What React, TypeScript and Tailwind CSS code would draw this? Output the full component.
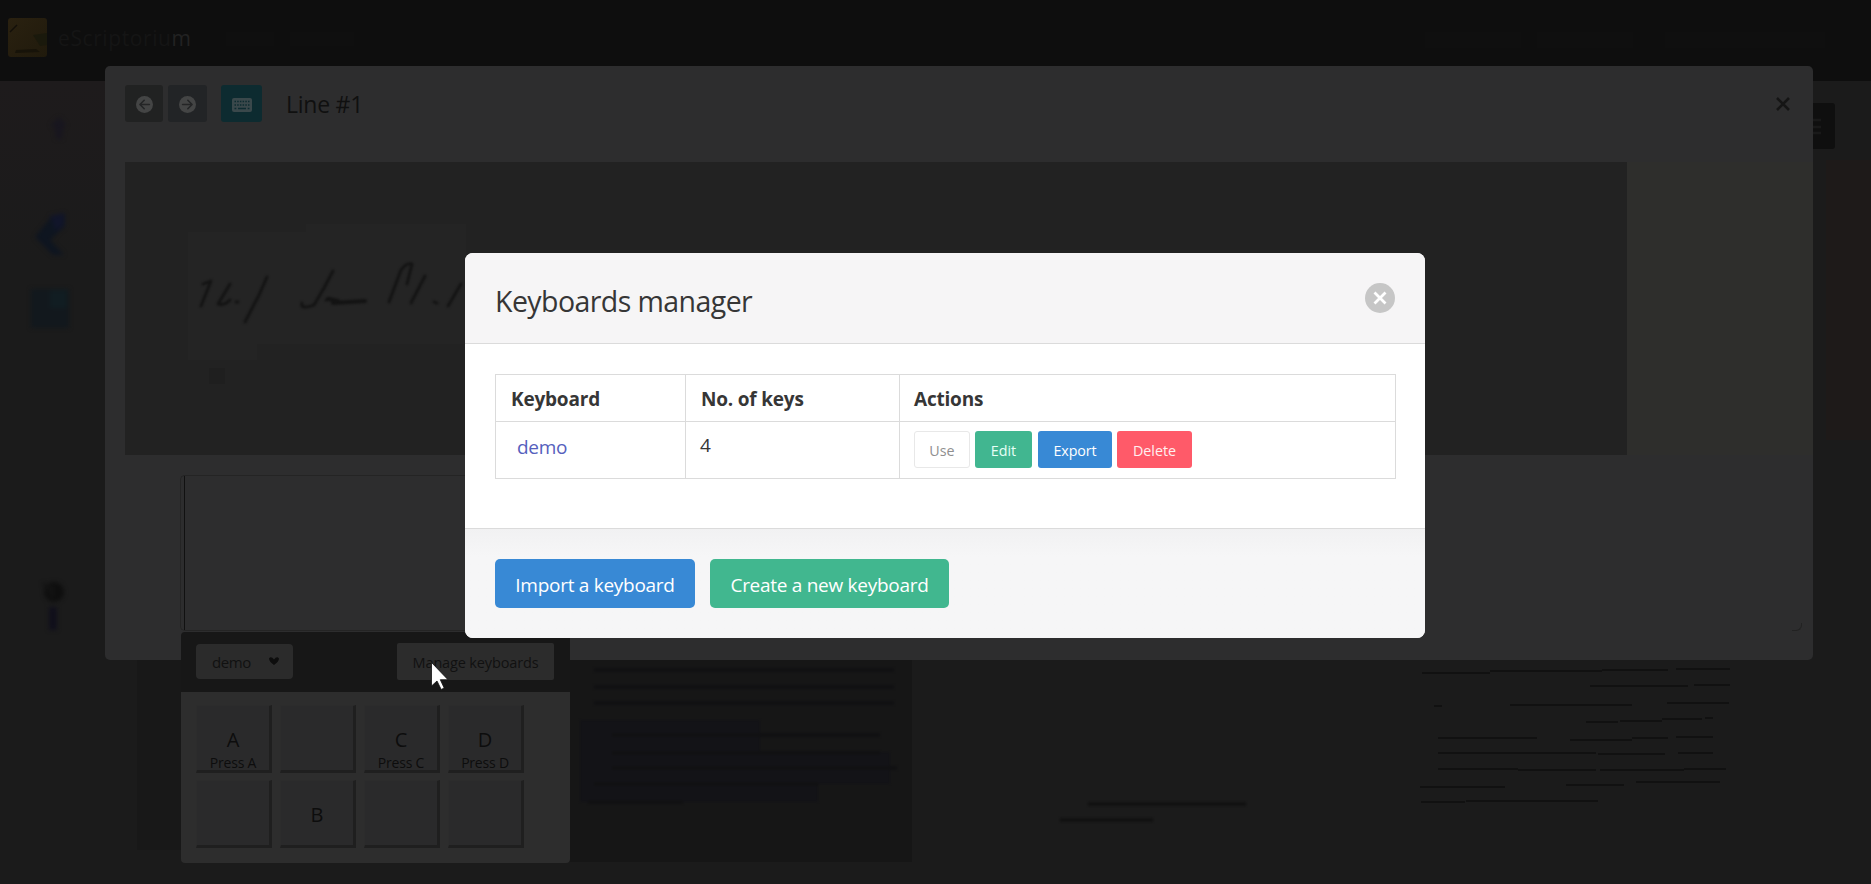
import type { ReactNode } from "react";

function CircleArrow({ flip = false }: { flip?: boolean }) {
  return (
    <svg width="17" height="17" viewBox="0 0 16 16" className={flip ? "-scale-x-100" : ""}>
      <circle cx="8" cy="8" r="8" fill="#444545" />
      <path d="M12.6 8H4M7.700 4L3.700 8l4 4" fill="none" stroke="#242526" strokeWidth="1.5" strokeLinecap="round" strokeLinejoin="round" />
    </svg>
  );
}

function KeyboardIcon() {
  return (
    <svg width="20" height="14" viewBox="0 0 20 14">
      <rect width="20" height="14" rx="2" fill="#3a484b" />
      <path d="M2.500 3.500h15M2.500 7h15" stroke="#0d2b30" strokeWidth="1.5" strokeDasharray="1.5 1.2" />
      <path d="M2.500 10.500H4.300M6 10.500h8M15.700 10.500h1.800" stroke="#0d2b30" strokeWidth="1.5" />
    </svg>
  );
}

function ToolButton({ className, children }: { className: string; children: ReactNode }) {
  return <button className={`flex h-[37px] items-center justify-center rounded-[3px] pt-0.5 ${className}`}>{children}</button>;
}

function SiteHeader() {
  return (
    <header className="flex h-[81px] items-start bg-[#0e0e0e] pl-2 pt-[18px]">
      <svg width="40" height="40" viewBox="0 0 40 40">
        <defs>
          <linearGradient id="logo" x1="0" y1="0" x2="1" y2="1">
            <stop offset="0" stopColor="#2a2110" />
            <stop offset="1" stopColor="#201a0c" />
          </linearGradient>
        </defs>
        <rect width="39" height="39" rx="3" fill="url(#logo)" />
        <path d="M7 35l25-1-4-3-20 1z" fill="#171309" />
        <path d="M2 14l7-7" stroke="#120f09" strokeWidth="1.5" />
        <path d="M25 17l14-2v12l-7 1z" fill="#1a190c" />
      </svg>
      <div className="ml-2.5 flex w-[136px] pt-[5px] text-[21px] leading-[30px] tracking-[0.6px]">
        <span className="text-[#151515]">eScriptoriu</span>
        <span className="text-[#222222]">m</span>
      </div>
      <div className="ml-8 mt-[14px] h-[14px] w-12 bg-[#0f0f0f]" />
      <div className="ml-4 mt-[14px] h-[14px] w-16 bg-[#0f0f0f]" />
      <div className="ml-[1071px] mt-[14px] h-4 w-24 bg-[#0f0f0f]" />
      <div className="ml-4 mt-[14px] h-4 w-24 bg-[#0f0f0f]" />
      <div className="ml-8 mt-[14px] h-4 w-40 bg-[#0f0f0f]" />
    </header>
  );
}

function PageDrawing() {
  return (
    <svg width="1871" height="803" viewBox="0 81 1871 803" className="block">
      <defs>
        <filter id="soft" x="-50%" y="-50%" width="200%" height="200%" colorInterpolationFilters="sRGB">
          <feGaussianBlur stdDeviation="2.2" />
        </filter>
        <filter id="faint" x="-10%" y="-50%" width="120%" height="200%" colorInterpolationFilters="sRGB">
          <feGaussianBlur stdDeviation="1" />
        </filter>
        <linearGradient id="tint" x1="0" y1="0" x2="0" y2="1">
          <stop offset="0" stopColor="#1e1b1c" />
          <stop offset="1" stopColor="#1b1b1b" />
        </linearGradient>
      </defs>
      <rect x="0" y="81" width="105" height="180" fill="url(#tint)" />
      <rect x="1826" y="160" width="45" height="280" fill="#1e1a19" />
      <g filter="url(#soft)">
        <path d="M59 117l7 8-3 4-1 10h-6l-1-10-4-4z" fill="#18161f" />
        <path d="M65 214V226L50 240 64 255H53L35 237 52 216z" fill="#0e1520" />
        <path d="M50 216l14-3v13l-8 5z" fill="#11152a" />
        <rect x="31" y="289" width="38" height="39" fill="#12181d" />
        <rect x="50" y="290" width="17" height="18" fill="#111d22" />
        <circle cx="54" cy="592" r="10" fill="#0e0e0e" />
        <path d="M42 583l12 2v16z" fill="#121212" />
        <rect x="49" y="607" width="8" height="23" fill="#100f1b" />
      </g>
      <rect x="1790" y="103" width="45" height="46" rx="3" fill="#0f0f0f" />
      <path d="M1805 120h16M1805 127h16M1805 133h16" stroke="#191919" strokeWidth="2.5" />
      <rect x="137" y="660" width="50" height="190" fill="#181818" />
      <rect x="568" y="660" width="344" height="202" fill="#161616" />
      <g filter="url(#faint)">
        <path d="M580 720H760V752H890V784H818V802H580z" fill="#131317" />
        <path d="M594 670h300M594 687h300M594 703h300M612 735h268M612 753h268M612 768h285M594 784h224M588 802h95" stroke="#111113" strokeWidth="4" />
      </g>
      <g filter="url(#faint)" stroke="#121212" strokeWidth="4">
        <path d="M1088 804h158M1060 820h93" />
      </g>
      <g stroke="#111111" strokeWidth="2" fill="none">
        <path d="M1422 673h68M1490 671h112M1602 670h66M1676 669h54" />
        <path d="M1590 686h98M1694 685h36" />
        <path d="M1434 706h8M1510 705h122M1667 703h62" />
        <path d="M1586 722h32M1620 721h42M1662 719h40M1705 718h8" />
        <path d="M1438 738h99M1570 740h62M1632 738h36M1676 737h37" />
        <path d="M1438 753h158M1598 754h67M1678 753h35" />
        <path d="M1438 769h80M1518 770h78M1600 770h84M1684 769h42" />
        <path d="M1420 787h85M1566 785h58M1636 782h84" />
        <path d="M1421 802h44M1466 801h132" />
      </g>
    </svg>
  );
}

function LineDialog() {
  return (
    <section className="absolute left-[105px] top-[66px] h-[594px] w-[1708px] overflow-hidden rounded-[5px] bg-[#2d2d2e]">
      <div className="flex h-24 pl-5 pt-[19px]">
        <ToolButton className="w-[38px] bg-[#212222]"><CircleArrow /></ToolButton>
        <ToolButton className="ml-[5px] w-[39px] bg-[#222426]"><CircleArrow flip /></ToolButton>
        <ToolButton className="ml-3.5 w-[41px] bg-[#0d2b30]"><KeyboardIcon /></ToolButton>
        <h1 className="ml-[24px] mt-px text-[23px] leading-9 tracking-[-0.25px] text-[#101010]">Line #1</h1>
        <svg width="14" height="14" viewBox="0 0 14 14" className="ml-auto mr-[23px] mt-[12px]">
          <path d="M1 1l12 12M13 1L1 13" stroke="#151515" strokeWidth="2.600" />
        </svg>
      </div>
      <div className="flex">
        <div className="ml-5 h-[293px] w-[1502px] bg-[#222222]">
          <svg width="1502" height="293" viewBox="125 162 1502 293">
            <defs>
              <filter id="ink" x="-10%" y="-20%" width="120%" height="140%" colorInterpolationFilters="sRGB">
                <feGaussianBlur stdDeviation="1.2" />
              </filter>
            </defs>
            <path d="M188 232h118v-8h160v120H257v16h-69z" fill="#242424" />
            <rect x="209" y="368" width="16" height="16" fill="#1f1f1f" />
            <g filter="url(#ink)" fill="none" stroke="#131313" strokeWidth="2.800" strokeLinecap="round" strokeLinejoin="round">
              <path d="M203 284l8-3-10 25M230 284l-12 20q6 2 12-4M236 302l2 0M267 277l-8 18-14 27" />
              <path d="M333 271l-9 17-10 17q-14 5-12-2M326 300q6-3 10 2" />
              <path d="M401 270l-12 32M401 270q6-8 11-6l-5 20M425 276l-14 27M434 302l3 1M461 284l-13 22" />
              <path d="M333 303l32-2M328 299l10 2" strokeWidth="4" />
            </g>
          </svg>
        </div>
        <div className="h-[293px] flex-1 bg-[#2e2e2c]" />
      </div>
      <div className="ml-[75px] mt-5 flex h-[156px] w-[1622px] items-end justify-between">
        <div className="h-[156px] w-[340px] rounded-l-[5px] border border-r-0 border-[#242424] pl-[3px]">
          <div className="h-[154px] border-l border-[#111111]" />
        </div>
        <div className="h-[8px] w-[10px] rounded-br-[6px] border-b border-r border-[#222222]" />
      </div>
    </section>
  );
}

function Key({ label, hint }: { label?: string; hint?: string }) {
  return (
    <div className="flex h-[68px] w-[76px] flex-col items-center border-b-[3px] border-r-[3px] border-[#1f1f1f] border-l border-t border-l-[#2c2c2c] border-t-[#2c2c2c] bg-[#2a2a2b] pt-[20px] text-[#0d0d0d]">
      <span className="text-[20px] leading-7">{label}</span>
      {hint && <span className="-mt-[1px] whitespace-nowrap text-[14px] leading-5 tracking-[-0.2px]">{hint}</span>}
    </div>
  );
}

function KeyboardPanel() {
  return (
    <section className="absolute left-[181px] top-[632px] h-[231px] w-[389px] overflow-hidden rounded-[4px] bg-[#2d2d2d]">
      <div className="flex h-[60px] items-start justify-between bg-[#171717] pl-[15px] pr-4 pt-[11px]">
        <div className="mt-px flex h-[35px] w-[97px] items-center rounded-[4px] bg-[#2b2b2b] pl-4 pt-0.5 text-[15px] tracking-[-0.4px] text-[#111111]">
          <span>demo</span>
          <svg width="12" height="10" viewBox="0 0 12 10" className="-mt-1 ml-[17px]">
            <path d="M1 2.500q2-3 5 1 3-4 5-1 0 3-5 6.500-5-3.500-5-6.500z" fill="#0d0d0d" />
          </svg>
        </div>
        <button className="h-[37px] w-[157px] whitespace-nowrap rounded-[2px] bg-[#2c2c2c] pt-0.5 text-[14.500px] tracking-[-0.15px] text-[#111111]">Manage keyboards</button>
      </div>
      <div className="grid grid-cols-[repeat(4,76px)] gap-x-2 gap-y-[7px] pl-[15px] pt-[13px]">
        <Key label="A" hint="Press A" />
        <Key />
        <Key label="C" hint="Press C" />
        <Key label="D" hint="Press D" />
        <Key />
        <Key label="B" />
        <Key />
        <Key />
      </div>
    </section>
  );
}

function SmallButton({ className, children }: { className: string; children: ReactNode }) {
  return <button className={`h-[37px] rounded-[3px] pt-0.5 text-[14.300px] leading-5 ${className}`}>{children}</button>;
}

function KeyboardsManager() {
  return (
    <section className="absolute left-[465px] top-[253px] flex h-[385px] w-[960px] flex-col overflow-hidden rounded-[8px] bg-white text-[#363636]">
      <header className="flex h-[91px] shrink-0 items-start justify-between border-b border-[#dbdbdb] bg-[#f6f5f6] px-[30px]">
        <h2 className="mt-[28px] text-[28.500px] leading-10 tracking-[-0.570px]">Keyboards manager</h2>
        <button className="mt-[30px] flex size-[30px] items-center justify-center rounded-full bg-[#c6c6c6]">
          <svg width="14" height="14" viewBox="0 0 14 14">
            <path d="M1.500 1.500l11 11M12.500 1.500l-11 11" stroke="#ffffff" strokeWidth="2.800" />
          </svg>
        </button>
      </header>
      <div className="h-[184px] shrink-0 px-[30px] pt-[30px]">
        <table className="w-[901px] table-fixed border-collapse border border-[#dbdbdb] text-left text-[19px]">
          <colgroup>
            <col className="w-[190px]" />
            <col className="w-[214px]" />
            <col />
          </colgroup>
          <thead>
            <tr className="h-[47px] tracking-[-0.2px]">
              <th className="border border-[#dbdbdb] p-0 pl-[15px] pt-[3px] font-bold">Keyboard</th>
              <th className="border border-[#dbdbdb] p-0 pl-[15px] pt-[3px] font-bold">No. of keys</th>
              <th className="border border-[#dbdbdb] p-0 pl-[14px] pt-[3px] font-bold">Actions</th>
            </tr>
          </thead>
          <tbody>
            <tr className="h-[57px] align-top leading-7">
              <td className="border border-[#dbdbdb] p-0 pl-[21px] pt-[11px] tracking-[-0.3px] text-[#5560bd]">demo</td>
              <td className="border border-[#dbdbdb] p-0 pl-[14px] pt-[9px]">4</td>
              <td className="border border-[#dbdbdb] p-0 pl-[14px] pt-[9px]">
                <div className="flex">
                  <SmallButton className="w-[56px] border border-[#e8e8e8] bg-white text-[#8f8f8f]">Use</SmallButton>
                  <SmallButton className="ml-[5px] w-[57px] bg-[#41b690] text-[#e6fff6]">Edit</SmallButton>
                  <SmallButton className="ml-[6px] w-[74px] bg-[#3889d5] tracking-[-0.1px] text-white">Export</SmallButton>
                  <SmallButton className="ml-[5px] w-[75px] bg-[#ff5a69] text-[#fff0f0]">Delete</SmallButton>
                </div>
              </td>
            </tr>
          </tbody>
        </table>
      </div>
      <footer className="flex flex-1 items-start gap-[15px] border-t border-[#dbdbdb] bg-gradient-to-b from-[#f1f1f2] from-0% to-[#f6f6f7] to-25% pl-[30px] pt-[30px] text-[19px] tracking-[-0.280px] text-white">
        <button className="h-[49px] w-[200px] rounded-[5px] bg-[#3889d5] pt-1">Import a keyboard</button>
        <button className="h-[49px] w-[239px] rounded-[5px] bg-[#41b78f] pt-1">Create a new keyboard</button>
      </footer>
    </section>
  );
}

export default function App() {
  return (
    <main className="relative h-[884px] w-[1871px] overflow-hidden bg-[#1b1b1b] font-['Open_Sans','Noto_Sans',sans-serif]">
      <SiteHeader />
      <PageDrawing />
      <LineDialog />
      <KeyboardPanel />
      <KeyboardsManager />
      <svg width="20" height="30" viewBox="0 0 20 30" className="absolute left-[430px] top-[661px]">
        <path d="M1.500 1.500V25L7 20l4.200 8.500 3-1.500L10.300 18.700H18z" fill="#ffffff" stroke="#111111" strokeWidth="0.800" />
      </svg>
    </main>
  );
}
